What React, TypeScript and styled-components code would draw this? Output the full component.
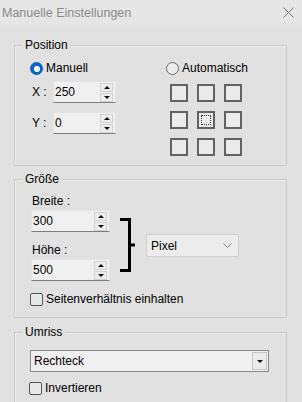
import React from 'react';
import styled, { createGlobalStyle } from 'styled-components';

const GlobalStyle = createGlobalStyle`
  html, body {
    margin: 0;
    padding: 0;
    background: #e1e1e1;
    overflow: hidden;
  }
  body {
    font-family: 'Liberation Sans', Arial, sans-serif;
    font-size: 12px;
    color: #000;
  }
`;

const Window = styled.div`
  width: 302px;
  height: 402px;
  background: #e1e1e1;
  overflow: hidden;
`;

const TitleBar = styled.div`
  height: 25px;
  background: #e6e6e6;
  display: flex;
  align-items: center;
  justify-content: space-between;
  padding: 0 8px 0 2px;
  color: #8a8a8a;
  font-size: 12.5px;
`;

const Content = styled.div`
  padding: 0 15px 0 14px;
`;

const GroupBox = styled.div<{ $top: number }>`
  position: relative;
  margin-top: ${p => p.$top}px;
  border: 1px solid #c9c9c9;
  box-shadow: inset 1px 1px 0 #ececec;
`;

const GroupTitle = styled.span`
  position: absolute;
  top: -8px;
  left: 7px;
  padding: 0 3px;
  line-height: 14px;
  background: #e1e1e1;
`;

const PositionBody = styled.div`
  display: flex;
  padding: 16px 0 9px 15px;
`;

const Column = styled.div<{ $width?: number }>`
  display: flex;
  flex-direction: column;
  width: ${p => (p.$width ? `${p.$width}px` : 'auto')};
`;

const OptionRow = styled.label`
  display: flex;
  align-items: center;
  gap: 3px;
  height: 13px;
  line-height: 13px;
  white-space: nowrap;
`;

const Radio = styled.span<{ $checked?: boolean }>`
  box-sizing: border-box;
  width: 13px;
  height: 13px;
  border-radius: 50%;
  flex: none;
  background: ${p => (p.$checked ? '#0a64c2' : '#ececec')};
  border: ${p => (p.$checked ? 'none' : '1px solid #6a6a6a')};
  display: flex;
  align-items: center;
  justify-content: center;
  &::after {
    content: '';
    display: ${p => (p.$checked ? 'block' : 'none')};
    width: 6px;
    height: 6px;
    border-radius: 50%;
    background: #fff;
  }
`;

const CheckBox = styled.span`
  box-sizing: border-box;
  width: 13px;
  height: 13px;
  border: 1px solid #555;
  border-radius: 2px;
  background: #e8e8e8;
  flex: none;
`;

const FieldRow = styled.div<{ $top: number }>`
  display: flex;
  align-items: center;
  margin-top: ${p => p.$top}px;
`;

const InlineLabel = styled.span`
  width: 21px;
  padding-left: 2px;
`;

const StackLabel = styled.div<{ $top: number }>`
  margin-top: ${p => p.$top}px;
  padding-left: 1px;
  line-height: 14px;
  height: 14px;
`;

const SpinBox = styled.div<{ $width: number; $top?: number }>`
  box-sizing: border-box;
  width: ${p => p.$width}px;
  height: 22px;
  margin-top: ${p => p.$top ?? 0}px;
  display: flex;
  align-items: center;
  background: #f0f0f0;
  border: 1px solid #e4e4e4;
  border-bottom: 1px solid #7e7e7e;
  padding: 0 2px 0 1px;
`;

const SpinValue = styled.span`
  flex: 1;
`;

const SpinButtons = styled.div`
  display: flex;
  flex-direction: column;
  gap: 1px;
`;

const SpinButton = styled.div<{ $down?: boolean }>`
  box-sizing: border-box;
  width: 13px;
  height: 9px;
  border: 1px solid #d2d2d2;
  background: #ececec;
  display: flex;
  align-items: center;
  justify-content: center;
  &::after {
    content: '';
    border-left: 3px solid transparent;
    border-right: 3px solid transparent;
    ${p =>
      p.$down
        ? 'border-top: 3px solid #111;'
        : 'border-bottom: 3px solid #111;'}
  }
`;

const AnchorGrid = styled.div`
  display: grid;
  grid-template-columns: repeat(3, 18px);
  grid-auto-rows: 18px;
  gap: 9px;
  margin: 9px 0 0 4px;
`;

const AnchorCell = styled.div<{ $focused?: boolean }>`
  box-sizing: border-box;
  border: 2px solid #626262;
  background: #ebebeb;
  position: relative;
  &::after {
    content: '';
    display: ${p => (p.$focused ? 'block' : 'none')};
    position: absolute;
    inset: 2px;
    border: 1px dotted #333;
  }
`;

const SizeBody = styled.div`
  padding: 14px 0 11px 16px;
`;

const SizeRow = styled.div`
  display: flex;
  align-items: flex-start;
`;

const Bracket = styled.svg`
  margin: 24px 0 0 10px;
  flex: none;
`;

const UnitSelect = styled.div`
  box-sizing: border-box;
  width: 93px;
  height: 23px;
  margin: 40px 0 0 10px;
  display: flex;
  align-items: center;
  justify-content: space-between;
  padding: 0 6px 0 4px;
  background: #ececec;
  border: 1px solid #cfcfcf;
  border-radius: 2px;
`;

const CheckRow = styled(OptionRow)<{ $top: number }>`
  margin-top: ${p => p.$top}px;
  gap: 3px;
  margin-left: -1px;
`;

const OutlineBody = styled.div`
  padding: 17px 0 12px 15px;
`;

const Combo = styled.div`
  box-sizing: border-box;
  width: 239px;
  height: 22px;
  display: flex;
  align-items: center;
  justify-content: space-between;
  padding: 0 1px 0 3px;
  background: #f0f0f0;
  border: 1px solid #8a8a8a;
`;

const ComboButton = styled.div`
  box-sizing: border-box;
  width: 15px;
  height: 18px;
  border: 1px solid #c6c6c6;
  background: #ebebeb;
  display: flex;
  align-items: center;
  justify-content: center;
  &::after {
    content: '';
    border-left: 3px solid transparent;
    border-right: 3px solid transparent;
    border-top: 3px solid #111;
  }
`;

const Spin = ({ value, width, top }: { value: string; width: number; top?: number }) => (
  <SpinBox $width={width} $top={top}>
    <SpinValue>{value}</SpinValue>
    <SpinButtons>
      <SpinButton />
      <SpinButton $down />
    </SpinButtons>
  </SpinBox>
);

const App = () => {
  const cells = Array.from({ length: 9 }, (_, i) => i);
  return (
    <>
      <GlobalStyle />
      <Window>
        <TitleBar>
          <span>Manuelle Einstellungen</span>
          <svg width="11" height="11" viewBox="0 0 11 11">
            <path d="M0.5 0.5 L10.5 10.5 M10.5 0.5 L0.5 10.5" stroke="#7a7a7a" strokeWidth="1" />
          </svg>
        </TitleBar>
        <Content>
          <GroupBox $top={20}>
            <GroupTitle>Position</GroupTitle>
            <PositionBody>
              <Column $width={136}>
                <OptionRow>
                  <Radio $checked />
                  Manuell
                </OptionRow>
                <FieldRow $top={6}>
                  <InlineLabel>X :</InlineLabel>
                  <Spin value="250" width={63} />
                </FieldRow>
                <FieldRow $top={9}>
                  <InlineLabel>Y :</InlineLabel>
                  <Spin value="0" width={63} />
                </FieldRow>
              </Column>
              <Column>
                <OptionRow>
                  <Radio />
                  Automatisch
                </OptionRow>
                <AnchorGrid>
                  {cells.map(i => (
                    <AnchorCell key={i} $focused={i === 4} />
                  ))}
                </AnchorGrid>
              </Column>
            </PositionBody>
          </GroupBox>

          <GroupBox $top={13}>
            <GroupTitle>Größe</GroupTitle>
            <SizeBody>
              <SizeRow>
                <Column $width={79}>
                  <StackLabel $top={0}>Breite :</StackLabel>
                  <Spin value="300" width={79} top={2} />
                  <StackLabel $top={11}>Höhe :</StackLabel>
                  <Spin value="500" width={79} top={2} />
                </Column>
                <Bracket width="16" height="54" viewBox="0 0 16 54">
                  <path d="M0 1.5 H9.5 V52.5 H0 M9.5 27 H15" stroke="#000" strokeWidth="3" fill="none" />
                </Bracket>
                <UnitSelect>
                  <span>Pixel</span>
                  <svg width="9" height="5" viewBox="0 0 9 5">
                    <path d="M0.5 0.5 L4.5 4.5 L8.5 0.5" stroke="#808080" fill="none" />
                  </svg>
                </UnitSelect>
              </SizeRow>
              <CheckRow $top={12}>
                <CheckBox />
                Seitenverhältnis einhalten
              </CheckRow>
            </SizeBody>
          </GroupBox>

          <GroupBox $top={14}>
            <GroupTitle>Umriss</GroupTitle>
            <OutlineBody>
              <Combo>
                <span>Rechteck</span>
                <ComboButton />
              </Combo>
              <CheckRow $top={10}>
                <CheckBox />
                Invertieren
              </CheckRow>
            </OutlineBody>
          </GroupBox>
        </Content>
      </Window>
    </>
  );
};

export default App;
